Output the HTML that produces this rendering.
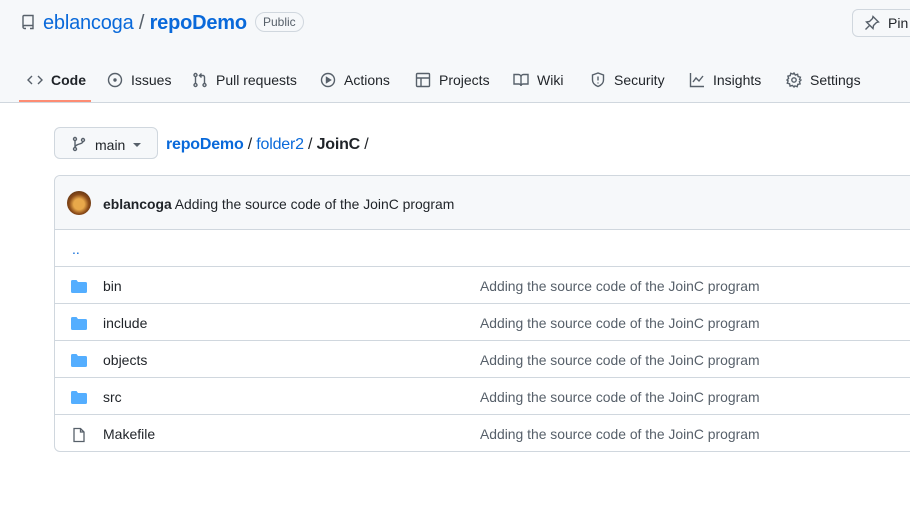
<!DOCTYPE html>
<html><head><style>
*{margin:0;padding:0;box-sizing:border-box}
body{width:910px;height:508px;overflow:hidden;background:#fff;font-family:"Liberation Sans",sans-serif;font-size:14px;color:#1f2328;position:relative}
.hdr{position:absolute;left:0;top:0;width:910px;height:103px;background:#f6f8fa;border-bottom:1px solid #d0d7de}
.abs{position:absolute;white-space:nowrap}
.blue{color:#0969da}
.tab{position:absolute;top:72px;font-size:14px;color:#1f2328;display:flex;align-items:center;gap:8px}
.tab svg{width:16px;height:16px;fill:none;stroke:#57606a;stroke-width:1.4}
.row{position:absolute;left:54px;width:870px;height:37px;border-top:1px solid #d0d7de}
.row .n{position:absolute;left:49px;top:11px}
.row .m{position:absolute;left:426px;top:11px;color:#57606a;font-size:13.9px}
.row svg{position:absolute;left:17px;top:12px}
</style></head><body>
<div class="hdr"></div>
<svg class="abs" style="left:20px;top:14px" width="16" height="16" viewBox="0 0 16 16" fill="none" stroke="#57606a" stroke-width="1.4"><path d="M3 13V2.5A1 1 0 0 1 4 1.5h9v10H4.5A1.5 1.5 0 0 0 3 13a1.5 1.5 0 0 0 1.5 1.5H6M10 14.5h3v-3"/></svg>
<div class="abs blue" style="left:43px;top:12px;font-size:20px;letter-spacing:-0.2px">eblancoga <span style="color:#57606a">/</span> <b>repoDemo</b></div>
<div class="abs" style="left:255px;top:12px;border:1px solid #d0d7de;border-radius:12px;padding:2px 7px;font-size:12px;color:#57606a">Public</div>
<div class="abs" style="left:852px;top:9px;width:70px;height:28px;border:1px solid #d0d7de;border-radius:6px;background:#f6f8fa"></div>
<svg class="abs" style="left:864px;top:15px" width="16" height="16" viewBox="0 0 16 16" fill="none" stroke="#57606a" stroke-width="1.4"><path d="M9 1.5l5.5 5.5-2 .5-3 3-.5 3L2.5 7l3-.5 3-3zM5.5 10.5l-4 4"/></svg>
<div class="abs" style="left:888px;top:15px">Pin</div>

<div class="tab" style="left:27px"><svg viewBox="0 0 16 16"><path d="M5 4L1 8l4 4M11 4l4 4-4 4"/></svg><span style="font-weight:600">Code</span></div>
<div class="abs" style="left:19px;top:100px;width:72px;height:2px;background:#fd8c73"></div>
<div class="tab" style="left:107px"><svg viewBox="0 0 16 16"><circle cx="8" cy="8" r="6.5"/><circle cx="8" cy="8" r="1" fill="#57606a"/></svg>Issues</div>
<div class="tab" style="left:192px"><svg viewBox="0 0 16 16"><circle cx="3.5" cy="3" r="1.5"/><circle cx="3.5" cy="13" r="1.5"/><circle cx="12.5" cy="13" r="1.5"/><path d="M3.5 4.5v7M12.5 11.5V5a1.5 1.5 0 0 0-1.5-1.5H8M9.5 1.5l-2 2 2 2"/></svg>Pull requests</div>
<div class="tab" style="left:320px"><svg viewBox="0 0 16 16"><circle cx="8" cy="8" r="6.5"/><path d="M6.5 5.5v5l4-2.5z" fill="#57606a"/></svg>Actions</div>
<div class="tab" style="left:415px"><svg viewBox="0 0 16 16"><rect x="1.5" y="1.5" width="13" height="13" rx="1"/><path d="M1.5 6h13M6 6v8.5"/></svg>Projects</div>
<div class="tab" style="left:513px"><svg viewBox="0 0 16 16"><path d="M1 2.5h4.5A2.5 2.5 0 0 1 8 5v9a2 2 0 0 0-2-2H1zM15 2.5h-4.5A2.5 2.5 0 0 0 8 5v9a2 2 0 0 1 2-2h5z"/></svg>Wiki</div>
<div class="tab" style="left:590px"><svg viewBox="0 0 16 16"><path d="M8 1L2.5 3v5c0 3.5 3 5.5 5.5 6.5 2.5-1 5.5-3 5.5-6.5V3z M8 4.5v4M8 10.5v1"/></svg>Security</div>
<div class="tab" style="left:689px"><svg viewBox="0 0 16 16"><path d="M1.5 1v13.5H15M4 10l3-4 3 3 4-5"/></svg>Insights</div>
<div class="tab" style="left:786px"><svg viewBox="0 0 16 16"><circle cx="8" cy="8" r="2.2"/><path d="M8 1l1.3 2 2.3-.7.5 2.3 2.3.6-.8 2.3L15 8l-1.6 1.6.7 2.3-2.3.5-.6 2.3-2.3-.8L8 15l-1.6-1.6-2.3.7-.5-2.3-2.3-.6.8-2.3L1 8l1.6-1.6-.7-2.3 2.3-.5.6-2.3 2.3.8z"/></svg>Settings</div>

<div class="abs" style="left:54px;top:127px;width:104px;height:32px;border:1px solid #d0d7de;border-radius:6px;background:#f6f8fa"></div>
<svg class="abs" style="left:71px;top:136px" width="16" height="16" viewBox="0 0 16 16" fill="none" stroke="#57606a" stroke-width="1.4"><circle cx="4" cy="3" r="1.5"/><circle cx="4" cy="13" r="1.5"/><circle cx="12" cy="4" r="1.5"/><path d="M4 4.5v7M12 5.5c0 3-8 2-8 6"/></svg>
<div class="abs" style="left:95px;top:137px">main</div>
<div class="abs" style="left:133px;top:143px;border-left:4px solid transparent;border-right:4px solid transparent;border-top:4px solid #57606a"></div>
<div class="abs" style="left:166px;top:136px;font-size:16px;letter-spacing:-0.2px"><b class="blue">repoDemo</b> / <span class="blue">folder2</span> / <b>JoinC</b> /</div>

<div class="abs" style="left:54px;top:175px;width:880px;height:277px;border:1px solid #d0d7de;border-radius:6px"></div>
<div class="abs" style="left:55px;top:176px;width:870px;height:53px;background:#f6f8fa;border-radius:6px 0 0 0"></div>
<div class="abs" style="left:67px;top:191px;width:24px;height:24px;border-radius:50%;background:radial-gradient(circle at 50% 55%,#e8a84a 0 30%,#8a4a18 55%,#3a2210 100%)"></div>
<div class="abs" style="left:103px;top:196px;font-size:13.9px"><b style="font-weight:600">eblancoga</b> Adding the source code of the JoinC program</div>

<div class="row" style="top:229px"><span class="n blue" style="left:18px">..</span></div>
<div class="row" style="top:266px"><svg width="16" height="16" viewBox="0 0 16 16"><path d="M0 2.5A1.5 1.5 0 0 1 1.5 1h4l1.5 2h7.5A1.5 1.5 0 0 1 16 4.5v8A1.5 1.5 0 0 1 14.5 14h-13A1.5 1.5 0 0 1 0 12.5z" fill="#54aeff"/></svg><span class="n">bin</span><span class="m">Adding the source code of the JoinC program</span></div>
<div class="row" style="top:303px"><svg width="16" height="16" viewBox="0 0 16 16"><path d="M0 2.5A1.5 1.5 0 0 1 1.5 1h4l1.5 2h7.5A1.5 1.5 0 0 1 16 4.5v8A1.5 1.5 0 0 1 14.5 14h-13A1.5 1.5 0 0 1 0 12.5z" fill="#54aeff"/></svg><span class="n">include</span><span class="m">Adding the source code of the JoinC program</span></div>
<div class="row" style="top:340px"><svg width="16" height="16" viewBox="0 0 16 16"><path d="M0 2.5A1.5 1.5 0 0 1 1.5 1h4l1.5 2h7.5A1.5 1.5 0 0 1 16 4.5v8A1.5 1.5 0 0 1 14.5 14h-13A1.5 1.5 0 0 1 0 12.5z" fill="#54aeff"/></svg><span class="n">objects</span><span class="m">Adding the source code of the JoinC program</span></div>
<div class="row" style="top:377px"><svg width="16" height="16" viewBox="0 0 16 16"><path d="M0 2.5A1.5 1.5 0 0 1 1.5 1h4l1.5 2h7.5A1.5 1.5 0 0 1 16 4.5v8A1.5 1.5 0 0 1 14.5 14h-13A1.5 1.5 0 0 1 0 12.5z" fill="#54aeff"/></svg><span class="n">src</span><span class="m">Adding the source code of the JoinC program</span></div>
<div class="row" style="top:414px"><svg width="16" height="16" viewBox="0 0 16 16" fill="none" stroke="#57606a" stroke-width="1.3"><path d="M3 1.5h6.5l3.5 3.5v9.5H3zM9.5 1.5V5H13"/></svg><span class="n">Makefile</span><span class="m">Adding the source code of the JoinC program</span></div>
</body></html>
